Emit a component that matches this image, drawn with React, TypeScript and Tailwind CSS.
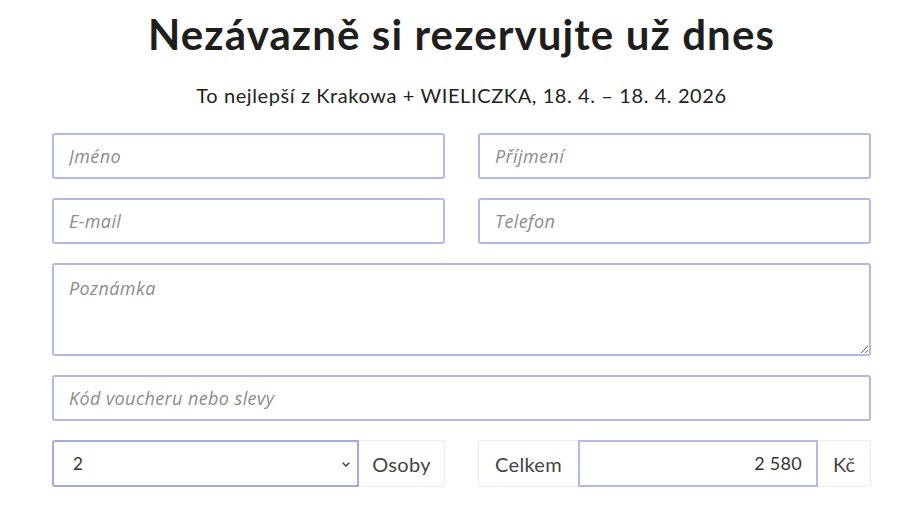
import React from 'react';

const inputCls =
  "w-full h-[46px] rounded-[3px] border-2 border-[#b0bae2] bg-white px-[15px] font-['Open_Sans',sans-serif] text-[18px] tracking-[0.4px] text-[#333] italic placeholder:text-[#8c8c8c] focus:outline-none";

export default function App() {
  return (
    <div className="min-h-[505px] bg-white font-['Lato',sans-serif] text-[#222]">
      <div className="ml-[52px] w-[819px] pt-[7px]">
        <h1 className="text-center text-[42px] font-bold leading-[54px] tracking-[1.1px] text-[#1e1e1e]">
          Nezávazně si rezervujte už dnes
        </h1>
        <p className="mt-[22px] text-center text-[20px] leading-[24px] tracking-[0.6px] text-[#222]">
          To nejlepší z Krakowa + WIELICZKA, 18. 4. – 18. 4. 2026
        </p>

        <form className="mt-[26px] flex flex-col gap-[19px]">
          <div className="grid grid-cols-2 gap-x-[33px] gap-y-[19px]">
            <input className={inputCls} placeholder="Jméno" />
            <input className={inputCls} placeholder="Příjmení" />
            <input className={inputCls} placeholder="E-mail" />
            <input className={inputCls} placeholder="Telefon" />
          </div>
          <textarea
            className="block h-[93px] w-full resize-y rounded-[3px] border-2 border-[#b0bae2] bg-white px-[15px] py-[10px] font-['Open_Sans',sans-serif] text-[18px] italic tracking-[0.4px] text-[#333] placeholder:text-[#8c8c8c] focus:outline-none"
            placeholder="Poznámka"
          />
          <input className={inputCls} placeholder="Kód voucheru nebo slevy" />

          <div className="grid grid-cols-2 gap-x-[33px]">
            <div className="flex h-[47px]">
              <div className="relative flex-1">
                <select
                  defaultValue="2"
                  className="h-full w-full appearance-none rounded-l-[3px] border-2 border-[#a0acdc] bg-white pl-[19px] text-[17px] text-[#333] focus:outline-none"
                >
                  <option value="1">1</option>
                  <option value="2">2</option>
                  <option value="3">3</option>
                  <option value="4">4</option>
                </select>
                <svg
                  className="pointer-events-none absolute right-[8px] top-1/2 -translate-y-1/2"
                  width="10"
                  height="10"
                  viewBox="0 0 10 10"
                  fill="none"
                >
                  <path d="M2 4l3 3 3-3" stroke="#444" strokeWidth="1.5" strokeLinecap="round" strokeLinejoin="round" />
                </svg>
              </div>
              <span className="flex w-[86px] items-center justify-center rounded-r-[3px] border border-l-0 border-[#ececec] text-[20px] tracking-[0.3px] text-[#444]">
                Osoby
              </span>
            </div>
            <div className="flex h-[47px]">
              <span className="flex w-[100px] items-center justify-center rounded-l-[3px] border border-r-0 border-[#ececec] text-[20px] tracking-[0.3px] text-[#444]">
                Celkem
              </span>
              <input
                readOnly
                value="2 580"
                className="min-w-0 flex-1 border-2 border-[#b0bae2] bg-white px-[14px] text-right text-[18px] tracking-[0.3px] text-[#333] focus:outline-none"
              />
              <span className="flex w-[53px] items-center justify-center rounded-r-[3px] border border-l-0 border-[#ececec] text-[20px] text-[#444]">
                Kč
              </span>
            </div>
          </div>
        </form>
      </div>
    </div>
  );
}
